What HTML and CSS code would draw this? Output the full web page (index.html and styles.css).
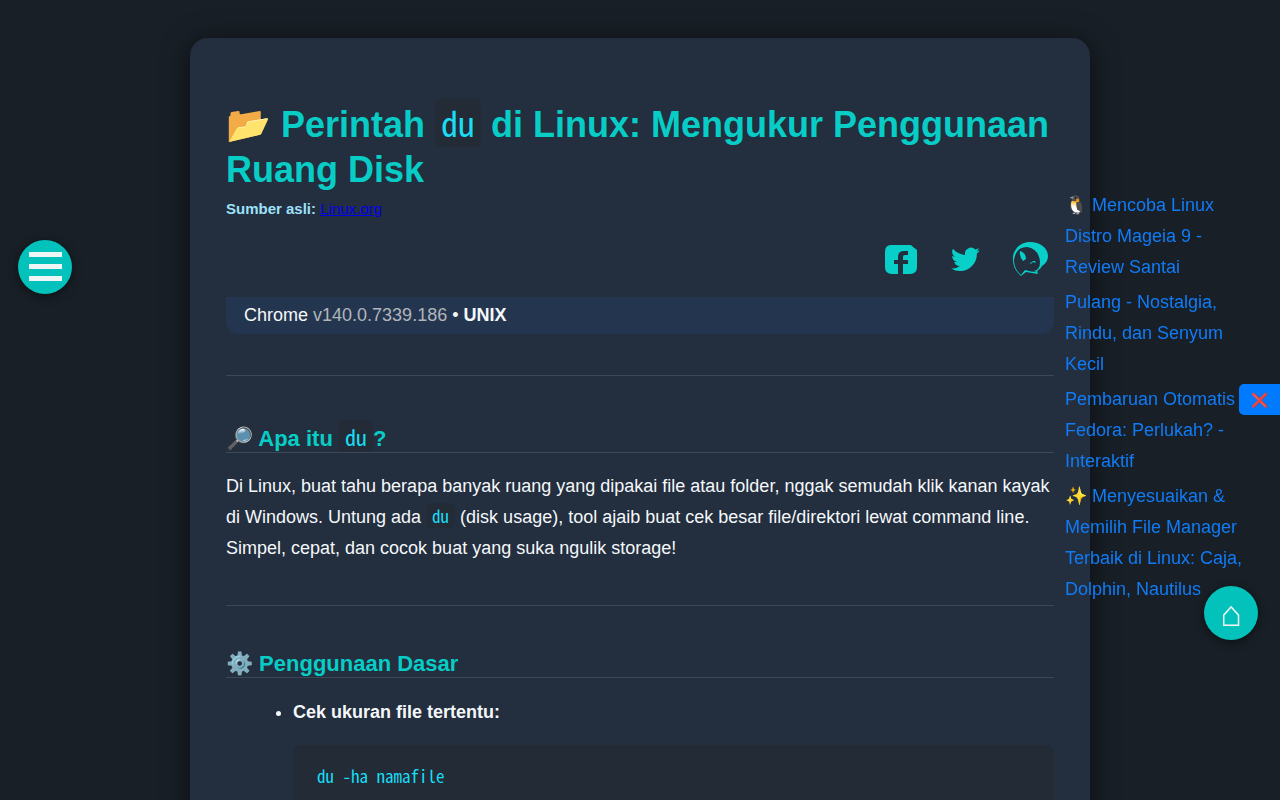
FILE: index.html
```html
<!DOCTYPE html>
<html lang="id">
<head>
<meta charset="utf-8">
<meta name="viewport" content="width=device-width, initial-scale=1">
<title>Perintah du di Linux</title>
<link rel="stylesheet" href="styles.css">
</head>
<body>
<main class="card">
  <header>
    <h1 class="title">📂 Perintah <code class="code">du</code> di Linux: Mengukur Penggunaan Ruang Disk</h1>
    <p class="source"><strong>Sumber asli:</strong> <a href="#linux-org">Linux.org</a></p>
  </header>
  <nav class="share" aria-label="Bagikan">
    <a href="#facebook" aria-label="Facebook"><svg viewBox="0 0 36 36"><path fill-rule="evenodd" d="M7 3h19q2 0 3 2l4 3v17q0 7-7 7h-7V22h5v-4h-5v-3q0-2 2-2h3V9h-4q-6 0-6 6v3h-4v4h4v10H8q-7 0-7-7V10q0-7 6-7Z"/></svg></a>
    <a href="#twitter" aria-label="Twitter"><svg viewBox="0 0 36 36"><path transform="translate(3 3) scale(1.200)" d="M23.950 4.570a10 10 0 0 1-2.820.770 4.960 4.960 0 0 0 2.160-2.720c-.950.550-2 .950-3.130 1.180a4.920 4.920 0 0 0-8.380 4.480C7.690 8.090 4.070 6.130 1.640 3.160a4.820 4.820 0 0 0-.670 2.480c0 1.710.870 3.210 2.190 4.100a4.900 4.900 0 0 1-2.230-.620v.060a4.920 4.920 0 0 0 3.950 4.830 5 5 0 0 1-2.210.080 4.940 4.940 0 0 0 4.600 3.420A9.870 9.870 0 0 1 0 19.540a14 14 0 0 0 7.550 2.210c9.050 0 14-7.500 14-13.990l-.020-.630a9.900 9.900 0 0 0 2.420-2.560z"/></svg></a>
    <a href="#whatsapp" aria-label="WhatsApp"><svg viewBox="0 0 36 36"><path fill-rule="evenodd" d="M1 18C0 7 9 0 18 0C28 0 36 6 36 14Q36 20 30 24L28 27Q24 28 26 32L14 30L9 34Q1 27 1 18ZM2 18Q2 27 9 33L13 28Q19 30 25 30L22 29Q28 28 28 20Q27 7 15 5Q4 5 2 18Z"/><path d="M8 9q6 2 6 8l-3 2q-4-5-3-10ZM17 20l2 1 2-2h2l1 2-3-1-2 2Z"/></svg></a>
  </nav>
  <div class="agent"><span>Chrome</span> <span class="version">v140.0.7339.186</span> • <strong>UNIX</strong></div>
  <hr class="rule">
  <section>
    <h2 class="heading">🔎 Apa itu <code class="code">du</code>?</h2>
    <p class="text">Di Linux, buat tahu berapa banyak ruang yang dipakai file atau folder, nggak semudah klik kanan kayak di Windows. Untung ada <code class="code">du</code> (disk usage), tool ajaib buat cek besar file/direktori lewat command line. Simpel, cepat, dan cocok buat yang suka ngulik storage!</p>
  </section>
  <hr class="rule">
  <section>
    <h2 class="heading">⚙️ Penggunaan Dasar</h2>
    <ul class="list">
      <li><strong>Cek ukuran file tertentu:</strong>
        <pre class="block"><code>du -ha namafile</code></pre>
      </li>
    </ul>
  </section>
</main>
<button class="round menu" type="button" aria-label="Menu"><svg viewBox="0 0 34 30"><path d="M1 0h33v5H1zM1 12h33v5H1zM1 24h33v5H1z"/></svg></button>
<aside class="related">
  <a href="#mageia">🐧 Mencoba Linux Distro Mageia 9 - Review Santai</a>
  <a href="#pulang">Pulang - Nostalgia, Rindu, dan Senyum Kecil</a>
  <a href="#fedora">Pembaruan Otomatis Fedora: Perlukah? - Interaktif</a>
  <a href="#file-manager">✨ Menyesuaikan &amp; Memilih File Manager Terbaik di Linux: Caja, Dolphin, Nautilus</a>
</aside>
<button class="close" type="button" aria-label="Tutup">❌</button>
<a class="round home" href="#home" aria-label="Beranda">⌂</a>
</body>
</html>
```
FILE: styles.css
```css
* { box-sizing: border-box; }
body {
  margin: 0;
  background: #181f26;
  color: #f4f8fb;
  font: 18px/31px "Liberation Sans", Arial, sans-serif;
}
html { scrollbar-width: none; }
.card {
  max-width: 900px;
  margin: 38px auto;
  padding: 64px 36px 36px;
  background: #232e3e;
  border-radius: 18px;
  box-shadow: 0 4px 28px rgba(0, 0, 0, .55);
}
.title { margin: 0; color: #08cdc6; font-size: 36px; line-height: 45px; }
.code, .block { font-family: "Noto Sans Mono CJK JP", "Noto Sans CJK JP", monospace; color: #1bdcf5; background: #222b36; }
.code { padding: 0 6px; border-radius: 6px; font-weight: 400; font-size: 17px; line-height: 1; }
.title .code { font-size: 34px; }
.source { margin: 4px 0 0; font-size: 15px; line-height: 26px; color: #9de1fa; }
.source a { color: #0000ee; }
.share { display: flex; justify-content: flex-end; gap: 28px; margin: 20px 6px 19px 0; }
.share a, .share svg { display: block; width: 36px; height: 36px; }
.share svg { fill: #08d0c8; }
.agent { padding: 3px 18px; background: #24364f; border-radius: 0 0 12px 12px; }
.version { color: #b0b5bc; }
.rule { height: 1px; margin: 41px 0; border: 0; background: #3b4858; }
.heading { margin: 0; padding-top: 4px; color: #08cdc6; font-size: 22px; line-height: 26px; border-bottom: 1px solid #3b4858; }
.heading .code { font-size: 22px; line-height: 30px; }
.text { margin: 18px 0 0; }
.list { margin: 19px 0 0; padding-left: 67px; }
.block { margin: 17px 0; padding: 16px 24px; font-size: 17px; line-height: 30px; border-radius: 8px; }
.block code { font: inherit; }
.round {
  position: fixed;
  display: flex;
  align-items: center;
  justify-content: center;
  width: 54px;
  height: 54px;
  padding: 0;
  border: 0;
  border-radius: 50%;
  background: #03c2bb;
  color: #eef5f5;
  box-shadow: 0 2px 10px rgba(0, 0, 0, .5);
}
.menu { left: 18px; top: 240px; }
.menu svg { width: 34px; height: 30px; fill: #eef5f5; }
.home { right: 22px; bottom: 160px; font-size: 36px; text-decoration: none; }
.related { position: fixed; top: 190px; right: 35px; width: 180px; display: flex; flex-direction: column; gap: 4px; }
.related a { color: #107bf5; text-decoration: none; }
.close { position: fixed; right: 0; top: 384px; width: 41px; height: 31px; padding: 0; border: 0; border-radius: 5px 0 0 5px; background: #007bff; color: #f44336; font-size: 14px; }
```
